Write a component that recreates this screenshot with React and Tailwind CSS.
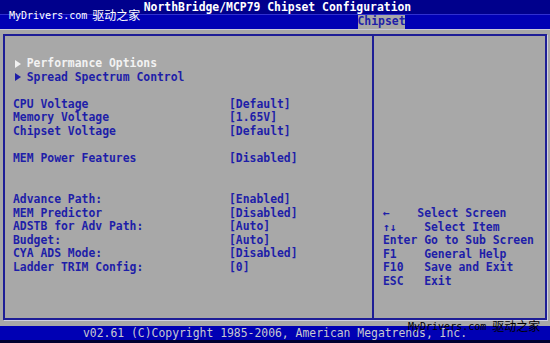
const mono = "font-['DejaVu_Sans_Mono','Liberation_Mono','Noto_Sans_CJK_SC',monospace]"

const rows = [
  {label: 'Performance Options', sub: true, active: true},
  {label: 'Spread Spectrum Control', sub: true},
  {},
  {label: 'CPU Voltage', value: '[Default]'},
  {label: 'Memory Voltage', value: '[1.65V]'},
  {label: 'Chipset Voltage', value: '[Default]'},
  {},
  {label: 'MEM Power Features', value: '[Disabled]'},
  {},
  {},
  {label: 'Advance Path:', value: '[Enabled]'},
  {label: 'MEM Predictor', value: '[Disabled]'},
  {label: 'ADSTB for Adv Path:', value: '[Auto]'},
  {label: 'Budget:', value: '[Auto]'},
  {label: 'CYA ADS Mode:', value: '[Disabled]'},
  {label: 'Ladder TRIM Config:', value: '[0]'},
]

const help = [
  '←    Select Screen',
  '↑↓    Select Item',
  'Enter Go to Sub Screen',
  'F1    General Help',
  'F10   Save and Exit',
  'ESC   Exit',
]

function Arrow({color}) {
  return (
    <span className="inline-flex w-[2ch] items-center">
      <svg width="7" height="8" viewBox="0 0 7 8" className="ml-[2px]">
        <path d="M0 0 L6 4 L0 8 Z" fill={color} />
      </svg>
    </span>
  )
}

function Row({label, value, sub, active}) {
  if (!label) return <div className="h-[13.6px]" />
  const color = active ? 'text-[#f2f2f2]' : 'text-[#1e1ea8]'
  return (
    <div className={`grid h-[13.6px] grid-cols-[216px_1fr] items-center leading-none ${color}`}>
      <span className="flex items-center whitespace-pre">
        {sub && <Arrow color={active ? '#f2f2f2' : '#1e1ea8'} />}
        {label}
      </span>
      <span>{value}</span>
    </div>
  )
}

export default function App() {
  return (
    <div className={`relative flex h-[343px] w-[550px] flex-col overflow-hidden bg-[#a8a8a8] text-[11.4px] font-bold ${mono}`}>
      {/* title bars */}
      <header className="flex h-[14px] items-center justify-center bg-[#00008c] pl-[5px] pt-px text-white">
        NorthBridge/MCP79 Chipset Configuration
      </header>
      <div className="flex h-[15px] border-t border-[#3030d0] bg-[#0000b4]">
        <div className="ml-[358px] flex w-[47px] items-center justify-center bg-[#a8a8a8] text-[#1e1ea8]">
          Chipset
        </div>
      </div>
      <div className="h-px bg-[#c8c8d8]" />

      {/* main panel */}
      <main className="flex flex-1 px-[3px] pt-[4px] pb-[6px]">
        <div className="flex flex-1 border-2 border-[#1e1e96] shadow-[1px_1px_0_#d0d0e0]">
          <section className="w-[369px] border-r-2 border-[#1e1e96] pl-[8px] pt-[21px]">
            {rows.map((r, i) => (
              <Row key={i} {...r} />
            ))}
          </section>
          <section className="flex-1 pl-[9px] pt-[171px] text-[#1e1ea8]">
            {help.map((h) => (
              <div key={h} className="flex h-[13.6px] items-center whitespace-pre leading-none">
                {h}
              </div>
            ))}
          </section>
        </div>
      </main>

      {/* footer */}
      <footer className="flex h-[14px] items-center bg-[#0000b4] pl-[83px] pt-px font-normal text-[#c8c8d0]">
        v02.61 (C)Copyright 1985-2006, American Megatrends, Inc.
      </footer>
      <div className="h-[3px] bg-[#000030]" />

      {/* watermarks */}
      <div className="absolute left-[9px] top-[10px] flex items-center gap-[5px] text-[10px] font-normal leading-none text-white">
        <span>MyDrivers.com</span>
        <span className="text-[12px]">驱动之家</span>
      </div>
      <div className="absolute left-[408px] top-[321px] flex items-center gap-[6px] text-[10px] font-normal leading-none text-black">
        <span>MyDrivers.com</span>
        <span className="text-[12px]">驱动之家</span>
      </div>
    </div>
  )
}
